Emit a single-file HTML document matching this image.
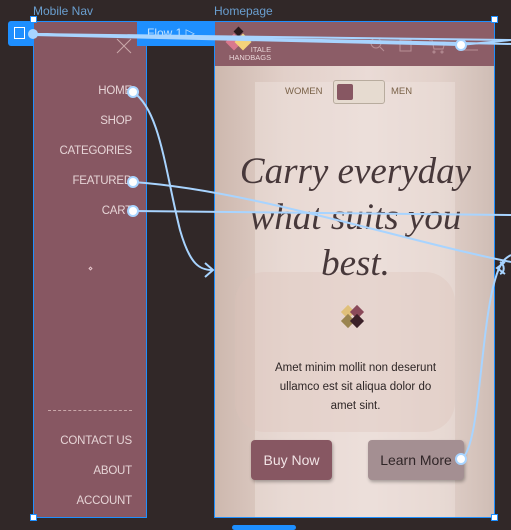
<!DOCTYPE html>
<html><head><meta charset="utf-8"><style>
*{margin:0;padding:0;box-sizing:border-box}
body{width:511px;height:528px;background:#312828;position:relative;overflow:hidden;font-family:"Liberation Sans",sans-serif}
.abs{position:absolute}
.lbl{color:#6a9fd0;font-size:12px}
.nav{left:33px;top:21px;width:114px;height:497px;background:#875762;border:1.5px solid #1e8fff}
.nav a{position:absolute;right:14px;color:#e6d4d6;font-size:11.5px;text-decoration:none;letter-spacing:-0.2px}
.home{left:214px;top:21px;width:281px;height:497px;border:1.5px solid #1e8fff;overflow:hidden;
background:linear-gradient(90deg,#cdb8ae 0%,#e2d0c9 25%,#eadbd6 55%,#e2d1ca 80%,#cfbdb5 100%)}
.hdr{left:0;top:0;width:100%;height:44px;background:#8c5d67}
.btn{position:absolute;border-radius:4px;font-size:14px;text-align:center;line-height:40px;box-shadow:1px 2px 3px rgba(0,0,0,.3)}
h1{position:absolute;left:0;width:281px;top:127px;text-align:center;font-family:"Liberation Serif",serif;font-style:italic;font-weight:normal;font-size:37px;line-height:46px;color:#47383a}
</style></head><body>
<div class="abs lbl" style="left:33px;top:4px">Mobile Nav</div>
<div class="abs lbl" style="left:214px;top:4px">Homepage</div>

<div class="abs nav">
 <svg class="abs" style="left:82px;top:16px" width="16" height="16"><path d="M1 1L15 15M15 1L1 15" stroke="#c9a7a9" stroke-width="1"/></svg>
 <a style="top:63px">HOME</a>
 <a style="top:93px">SHOP</a>
 <a style="top:123px">CATEGORIES</a>
 <a style="top:153px">FEATURED</a>
 <a style="top:183px">CART</a>
 <div class="abs" style="left:55px;top:245px;width:3px;height:3px;border:1px solid #e6c6cc;transform:rotate(45deg)"></div>
 <div class="abs" style="left:14px;top:388px;width:84px;border-top:1px dashed #c9a7a9"></div>
 <a style="top:413px">CONTACT US</a>
 <a style="top:443px">ABOUT</a>
 <a style="top:473px">ACCOUNT</a>
</div>

<div class="abs home">
 <div class="abs" style="left:40px;top:60px;width:200px;height:440px;background:#f0e4e0;opacity:.45"></div>
 <div class="abs" style="left:20px;top:250px;width:220px;height:160px;background:#dcc4bb;border-radius:30px;opacity:.35"></div>
 <div class="abs hdr">
  <svg class="abs" style="left:10px;top:4px" width="30" height="26"><rect x="10" y="2" width="7" height="7" fill="#2a1a1e" transform="rotate(45 13.5 5.5)"/><rect x="3" y="10" width="12" height="12" fill="#d9788d" transform="rotate(45 9 16)"/><rect x="12" y="10" width="12" height="12" fill="#f3d27a" transform="rotate(45 18 16)"/></svg>
  <div class="abs" style="left:14px;top:24px;color:#e8d4d6;font-size:7.5px;line-height:8px;text-align:right">ITALE<br>HANDBAGS</div>
  <svg class="abs" style="left:150px;top:14px" width="120" height="20" fill="none" stroke="#b78f96" stroke-width="1"><circle cx="11" cy="7" r="5"/><path d="M15 11L19 15"/><rect x="35" y="4" width="11" height="11"/><path d="M64 4h3l2 9h9l2-7h-12"/><circle cx="69" cy="16" r="1"/><circle cx="77" cy="16" r="1"/><path d="M95 8h18M95 14h18"/></svg>
 </div>
 <div class="abs" style="left:70px;top:64px;color:#7a6248;font-size:9.5px">WOMEN</div>
 <div class="abs" style="left:118px;top:58px;width:52px;height:24px;background:#e6dbd0;border:1px solid #b8ac9e;border-radius:3px"><div style="margin:3px;width:16px;height:16px;background:#875762;border-radius:2px"></div></div>
 <div class="abs" style="left:176px;top:64px;color:#7a6248;font-size:9.5px">MEN</div>
 <h1>Carry everyday<br>what suits you<br>best.</h1>
 <svg class="abs" style="left:122px;top:280px" width="34" height="34"><rect x="6" y="5" width="10" height="10" fill="#e0c07a" transform="rotate(45 11 10)"/><rect x="15" y="5" width="10" height="10" fill="#8a4a5a" transform="rotate(45 20 10)"/><rect x="6" y="14" width="10" height="10" fill="#9a8450" transform="rotate(45 11 19)"/><rect x="15" y="14" width="10" height="10" fill="#3a2028" transform="rotate(45 20 19)"/></svg>
 <div class="abs" style="left:0;width:281px;top:337px;text-align:center;font-size:11.5px;line-height:19px;color:#2e2626">Amet minim mollit non deserunt<br>ullamco est sit aliqua dolor do<br>amet sint.</div>
 <div class="btn" style="left:36px;top:418px;width:81px;background:#875762;color:#f1e3e5">Buy Now</div>
 <div class="btn" style="left:153px;top:418px;width:96px;background:#a48f92;color:#2f2527">Learn More</div>
</div>

<div class="abs" style="left:137px;top:21px;width:77px;height:25px;background:#1e8fff;color:#bfe0ff;font-size:12px;line-height:25px;padding-left:10px">Flow 1 ▷</div>
<div class="abs" style="left:8px;top:21px;width:25px;height:25px;background:#1e8fff;border-radius:3px 0 0 3px"><div style="margin:6px 0 0 6px;width:11px;height:12px;border:1.5px solid #fff"></div></div>
<div class="abs" style="left:30px;top:16px;width:7px;height:7px;background:#fff;border:1px solid #1e8fff"></div>
<div class="abs" style="left:30px;top:514px;width:7px;height:7px;background:#fff;border:1px solid #1e8fff"></div>
<div class="abs" style="left:491px;top:514px;width:7px;height:7px;background:#fff;border:1px solid #1e8fff"></div>
<div class="abs" style="left:491px;top:16px;width:7px;height:7px;background:#fff;border:1px solid #1e8fff"></div>
<div class="abs" style="left:232px;top:525px;width:64px;height:5px;background:#1e8fff;border-radius:3px"></div>

<svg class="abs" style="left:0;top:0" width="511" height="528" fill="none" stroke="#a8d4ff" stroke-width="2">
 <path d="M33 34L511 40M33 34L511 44M33 35L460 45L511 40"/>
 <path d="M133 92C160 110 165 170 180 230C190 265 200 270 212 270"/>
 <path d="M205 263L213 270L205 277"/>
 <path d="M133 182C250 190 400 240 511 262"/>
 <path d="M133 211L511 215"/>
 <path d="M500 262C505 265 505 272 500 274M505 262L497 268L505 274"/>
 <path d="M461 459C480 450 480 330 495 280C500 262 505 258 511 255"/>
 <circle cx="33" cy="34" r="4" fill="#a8d4ff"/>
 <circle cx="461" cy="45" r="5" fill="#fff"/>
 <circle cx="133" cy="92" r="5" fill="#fff"/>
 <circle cx="133" cy="182" r="5" fill="#fff"/>
 <circle cx="133" cy="211" r="5" fill="#fff"/>
 <circle cx="461" cy="459" r="5" fill="#fff"/>
</svg>
</body></html>
